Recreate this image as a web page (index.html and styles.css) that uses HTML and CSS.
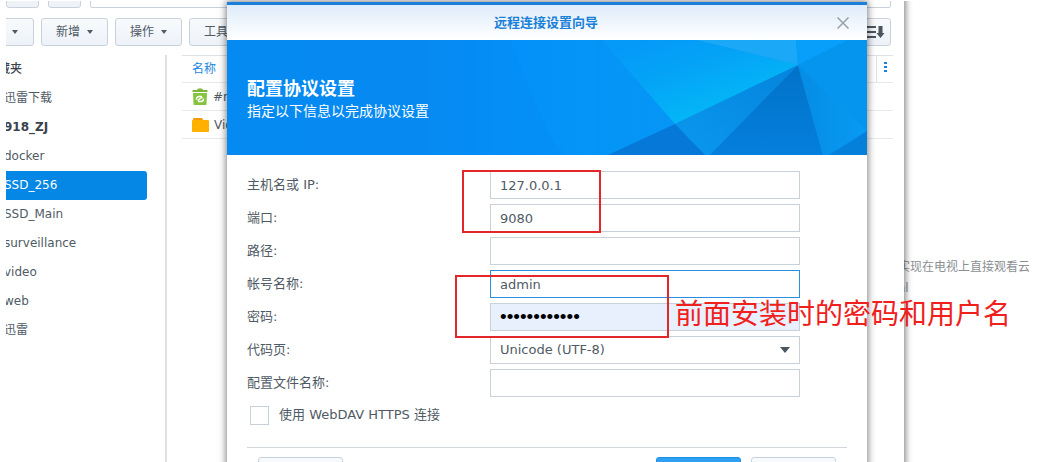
FILE: index.html
```html
<!DOCTYPE html>
<html lang="zh-CN">
<head>
<meta charset="utf-8">
<title>远程连接设置向导</title>
<link rel="stylesheet" href="styles.css">
</head>
<body>
<div class="desktop">
  <div class="article">
    <p>实现在电视上直接观看云</p>
    <p class="article-sub">al</p>
  </div>

  <section class="window">
    <div class="nav">
      <button class="btn nav-btn" type="button" aria-label="后退"></button>
      <button class="btn nav-btn" type="button" aria-label="前进"></button>
      <input class="path" type="text" aria-label="路径栏">
    </div>
    <div class="toolbar">
      <button class="btn btn-cut" type="button" aria-label="更多"><span class="caret"></span></button>
      <button class="btn" type="button">新增<span class="caret"></span></button>
      <button class="btn" type="button">操作<span class="caret"></span></button>
      <button class="btn" type="button">工具<span class="caret"></span></button>
      <button class="btn sort" type="button" aria-label="排序">
        <svg width="24" height="14" viewBox="0 0 24 14"><path d="M2 2h13M2 7h13M2 12h13" stroke="#4a5560" stroke-width="2"/><path d="M17.500 1h4v7h2l-4 5-4-5h2z" fill="#4a5560"/></svg>
      </button>
    </div>
    <div class="main">
      <ul class="tree">
        <li class="tree-head">藏夹</li>
        <li>迅雷下载</li>
        <li class="strong">918_ZJ</li>
        <li>docker</li>
        <li class="selected">SSD_256</li>
        <li>SSD_Main</li>
        <li>surveillance</li>
        <li>video</li>
        <li>web</li>
        <li>迅雷</li>
      </ul>
      <div class="list">
        <div class="row head"><span>名称</span>
          <button class="more" type="button" aria-label="列"><svg width="3" height="11" viewBox="0 0 3 11"><path d="M0 0h3v2H0zM0 4h3v2H0zM0 8h3v2H0z" fill="#1a7fd9"/></svg></button>
        </div>
        <div class="row">
          <svg width="16" height="18" viewBox="0 0 16 18"><path d="M1 2h4l1-1.500h4L11 2h4q.5 0 .5.500V4H.5V2.500Q.5 2 1 2z" fill="#7db63a"/><path d="M1 5h14l-.5 11q0 1-1 1h-11q-1 0-1-1z" fill="#86c440"/><path d="M4.500 11.500v-.5a2.500 2.500 0 0 1 2.500-2.500h3M11.500 10.500v.5a2.500 2.500 0 0 1-2.500 2.500H6M5.500 12.500l5-3.500" fill="none" stroke="#fff" stroke-width="1.500"/></svg>
          #recycle</div>
        <div class="row">
          <svg width="17" height="16" viewBox="0 0 17 16"><path d="M1 3.500V2q0-1 1-1h8l1.500 2.500z" fill="#f59a0c"/><rect y="3" width="17" height="12" rx="1" fill="#ffb000"/></svg>
          Video</div>
      </div>
    </div>
  </section>

  <section class="dialog" role="dialog" aria-labelledby="dlg-title">
    <header class="dialog-head">
      <h1 id="dlg-title">远程连接设置向导</h1>
      <button class="close" type="button" aria-label="关闭"><svg width="12" height="12" viewBox="0 0 12 12"><path d="M.5.5l11 11M11.500.5l-11 11" stroke="#98a1a9" stroke-width="1.500"/></svg></button>
    </header>
    <div class="banner">
      <svg class="facets" viewBox="0 0 640 115" preserveAspectRatio="none" aria-hidden="true">
        <defs>
          <linearGradient id="base"><stop offset="0" stop-color="#068bf2"/><stop offset=".3" stop-color="#078bf2"/><stop offset=".45" stop-color="#0491fa"/><stop offset=".6" stop-color="#0595f6"/><stop offset="1" stop-color="#0598f5"/></linearGradient>
          <linearGradient id="cyan" gradientUnits="userSpaceOnUse" x1="440" y1="-10" x2="470" y2="80"><stop offset="0" stop-color="#0599f8"/><stop offset=".4" stop-color="#04a2f7"/><stop offset="1" stop-color="#04b7f6"/></linearGradient>
          <linearGradient id="mid" x1="1" y1="0" x2="0" y2="1"><stop offset="0" stop-color="#0584dc"/><stop offset="1" stop-color="#0a98ee"/></linearGradient>
          <linearGradient id="deep" x1="0" y1="0" x2="0" y2="1"><stop offset="0" stop-color="#0272c8"/><stop offset="1" stop-color="#047fdc"/></linearGradient>
          <linearGradient id="right" x1="0" y1="0" x2="1" y2="0"><stop offset="0" stop-color="#068ce4"/><stop offset="1" stop-color="#079af4"/></linearGradient>
        </defs>
        <path d="M0 0h640v115H0z" fill="url(#base)"/>
        <path d="M0 0h283l37 91 16 24H0z" fill="#0588ee" opacity=".25"/>
        <path d="M375 0h95l101 25-123 59z" fill="url(#cyan)"/>
        <path d="M470 0h99l2 25z" fill="#1ba8f7"/>
        <path d="M569 0h52l-50 25z" fill="#079ffa"/>
        <path d="M571 25L448 84l30 31h7z" fill="url(#mid)"/>
        <path d="M448 84l-67 31h97z" fill="#0578d8"/>
        <path d="M571 25l-88 90h113z" fill="url(#deep)"/>
        <path d="M571 25l25 90h44V91z" fill="url(#right)"/>
        <path d="M571 25l50-25h19v91z" fill="#0594ee"/>
        <path d="M640 91l-38 24h38z" fill="#047fda"/>
      </svg>
      <div class="banner-text">
        <h2>配置协议设置</h2>
        <p>指定以下信息以完成协议设置</p>
      </div>
    </div>
    <form class="form">
      <div class="fields">
        <label for="host">主机名或 IP:</label><input id="host" class="field" type="text" value="127.0.0.1">
        <label for="port">端口:</label><input id="port" class="field" type="text" value="9080">
        <label for="dir">路径:</label><input id="dir" class="field" type="text">
        <label for="user">帐号名称:</label><input id="user" class="field active" type="text" value="admin">
        <label for="pass">密码:</label><input id="pass" class="field password" type="password" value="abcdefghijkl">
        <label for="code">代码页:</label><select id="code" class="field code"><option>Unicode (UTF-8)</option></select>
        <label for="profile">配置文件名称:</label><input id="profile" class="field" type="text">
      </div>
      <div class="check"><input id="https" type="checkbox"><label for="https">使用 WebDAV HTTPS 连接</label></div>
      <footer class="actions">
        <button class="btn action" type="button" aria-label="上一步"></button>
        <button class="btn action primary" type="button" aria-label="下一步"></button>
        <button class="btn action" type="button" aria-label="取消"></button>
      </footer>
    </form>
    <div class="mark mark-host"></div>
    <div class="mark mark-user"></div>
    <p class="note">前面安装时的密码和用户名</p>
  </section>
</div>
</body>
</html>
```
FILE: styles.css
```css
* { box-sizing: border-box; }
body, h1, h2, p, ul { margin: 0; padding: 0; }
body {
  background: #fff;
  color: #4f5a64;
  font: 12px/18px "DejaVu Sans", "Noto Sans CJK SC", sans-serif;
}
button, input, select { font: inherit; color: inherit; }
.desktop { position: relative; height: 100vh; overflow: hidden; }

.article {
  position: absolute;
  left: 898px;
  right: 10px;
  top: 257px;
  overflow: hidden;
  white-space: nowrap;
  color: #8b8f94;
  line-height: 21px;
}

.window {
  position: absolute;
  left: 6px;
  right: 135px;
  top: -30px;
  bottom: -20px;
  padding-top: 10px;
  display: flex;
  flex-direction: column;
  background: #fff;
  box-shadow: 1px 0 6px 1px rgba(0, 0, 0, .45);
  clip-path: inset(31px -12px 0 0);
}
.nav, .toolbar { display: flex; gap: 7px; padding-right: 13px; }
.nav { gap: 9px; margin-bottom: 10px; }
.toolbar { margin-bottom: 9px; }
.btn {
  display: flex;
  align-items: center;
  justify-content: center;
  gap: 7px;
  height: 28px;
  padding: 0 14px;
  border: 1px solid #c8d2dc;
  border-radius: 3px;
  background: linear-gradient(#f8fafd, #edf2f8);
}
.nav-btn { width: 33px; }
.path { flex: 1; height: 28px; border: 1px solid #c8d2dc; border-radius: 2px; }
.btn-cut { width: 38px; margin-left: -10px; }
.sort { margin-left: auto; padding: 0 5px; }
.caret {
  border: 3px solid transparent;
  border-top: 4px solid #4f5a64;
  border-bottom: 0;
}
.main { display: flex; flex: 1; }
.tree {
  width: 161px;
  border-right: 2px solid #dfe2e5;
  list-style: none;
}
.tree li {
  height: 29px;
  margin-right: 18px;
  line-height: 29px;
  text-indent: -2px;
  white-space: nowrap;
  border-radius: 0 3px 3px 0;
}
.tree .tree-head { text-indent: -8px; font-weight: 500; color: #39434c; }
.tree .strong { font-weight: bold; color: #39434c; }
.tree .selected { background: #0587e6; color: #fff; }
.list { flex: 1; margin: 0 11px 0 15px; }
.row {
  display: flex;
  align-items: center;
  gap: 5px;
  height: 28px;
  padding-left: 10px;
  border-bottom: 1px solid #e6eaee;
}
.head { border-top: 1px solid #dde2e6; color: #1a86e0; }
.more {
  width: 17px;
  height: 26px;
  margin-left: auto;
  padding: 0;
  border: 0;
  border-left: 1px solid #dde2e6;
  background: none;
}

.dialog {
  position: absolute;
  left: 227px;
  right: 172px;
  top: 2px;
  border-top: 3px solid #1a7fd9;
  background: #fff;
  box-shadow: 0 0 7px 1px rgba(0, 0, 0, .5);
}
.dialog-head {
  display: flex;
  align-items: center;
  height: 35px;
  padding: 0 18px 0 28px;
  background: linear-gradient(#deecfa, #fff);
}
.dialog-head h1 {
  flex: 1;
  text-align: center;
  font-size: 13px;
  color: #1a80d8;
}
.close { display: flex; padding: 0; border: 0; background: none; }
.banner { display: grid; height: 115px; }
.facets, .banner-text { grid-area: 1 / 1; }
.facets { width: 100%; height: 115px; }
.banner-text { z-index: 1; padding: 37px 20px 0; color: #fff; }
.banner-text h2 { font-size: 18px; line-height: 24px; }
.banner-text p { font-size: 14px; line-height: 20px; }
.form { padding: 16px 20px; font-size: 13px; }
.fields {
  display: grid;
  grid-template-columns: 243px 1fr;
  row-gap: 5px;
  align-items: center;
  padding-right: 47px;
}
.field {
  width: 100%;
  height: 28px;
  padding: 0 9px;
  border: 1px solid #c8d0d8;
  border-radius: 0;
  background: #fff;
}
.active { border-color: #2a8fe2; }
.password {
  background: #e8f0fe;
  color: #000;
  font-family: "Liberation Sans", sans-serif;
  font-size: 19px;
}
.code {
  appearance: none;
  background: #fff url("data:image/svg+xml,%3Csvg xmlns='http://www.w3.org/2000/svg' width='10' height='6'%3E%3Cpath d='M0 0h10L5 6z' fill='%234a5560'/%3E%3C/svg%3E") no-repeat right 9px center;
}
.check { display: flex; align-items: center; gap: 10px; height: 36px; padding-left: 3px; }
.check input {
  appearance: none;
  width: 19px;
  height: 19px;
  margin: 0;
  border: 1px solid #c8d0d8;
  background: #fff;
}
.actions {
  display: flex;
  gap: 10px;
  margin-top: 14px;
  padding: 9px 11px 0;
  border-top: 1px solid #d3d8dd;
}
.action { width: 85px; }
.primary {
  margin-left: auto;
  border-color: #1a8fe8;
  background: #2ea1f4;
  color: #fff;
}
.mark { position: absolute; border: 2px solid #e3262a; }
.mark-host { left: 235px; top: 165px; width: 139px; height: 63px; }
.mark-user { left: 228px; top: 270px; width: 214px; height: 63px; }
.note {
  position: absolute;
  left: 448px;
  top: 290px;
  color: #f0201c;
  font-size: 28px;
  line-height: 40px;
  white-space: nowrap;
}
```
